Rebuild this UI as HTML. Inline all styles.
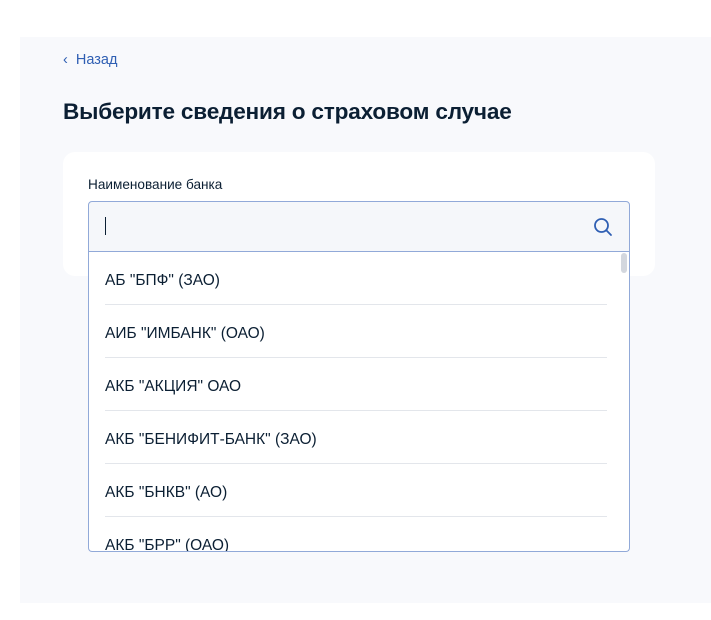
<!DOCTYPE html>
<html><head><meta charset="utf-8"><style>
*{margin:0;padding:0;box-sizing:border-box}
body{width:711px;height:620px;background:#fff;font-family:"Liberation Sans",sans-serif;position:relative;overflow:hidden}
.panel{position:absolute;left:20px;top:37px;width:691px;height:566px;background:#f8f9fc}
.back{position:absolute;left:63px;top:52px;font-size:14.5px;color:#2f5fb3}
.title{position:absolute;left:63px;top:99px;font-size:22.6px;font-weight:bold;color:#0b1f33;letter-spacing:-0.2px}
.card{position:absolute;left:63px;top:152px;width:592px;height:124px;background:#fff;border-radius:12px}
.label{position:absolute;left:88px;top:177px;font-size:13.6px;color:#0b1f33}
.input{position:absolute;left:88px;top:201px;width:542px;height:51px;background:#f5f7fa;border:1.5px solid #91a9d8;border-radius:4px 4px 0 0;z-index:2}
.caret{position:absolute;left:16px;top:15px;width:1px;height:18px;background:#0b1f33}
.dd{position:absolute;left:88px;top:251px;width:542px;height:301px;background:#fff;border:1.5px solid #91a9d8;border-top:none;border-radius:0 0 4px 4px;overflow:hidden}
.item{position:absolute;left:16px;width:502px;height:53px;font-size:15.5px;color:#0b1f33;line-height:57px;border-bottom:1px solid #e3e6eb;white-space:nowrap}
.sb{position:absolute;right:2px;top:2px;width:6px;height:20px;background:#d3d7de;border-radius:3px}
</style></head><body>
<div class="panel"></div>
<div class="back">‹&nbsp;&nbsp;Назад</div>
<div class="title">Выберите сведения о страховом случае</div>
<div class="card"></div>
<div class="label">Наименование банка</div>
<div class="input"><div class="caret"></div>
<svg style="position:absolute;left:504px;top:15px" width="20" height="20" viewBox="0 0 20 20"><circle cx="8.5" cy="8.5" r="6.5" fill="none" stroke="#2f5fb3" stroke-width="1.8"/><path d="M13.3 13.3L18 18" stroke="#2f5fb3" stroke-width="1.8" stroke-linecap="round"/></svg></div>
<div class="dd">
<div class="item" style="top:1px">АБ "БПФ" (ЗАО)</div>
<div class="item" style="top:54px">АИБ "ИМБАНК" (ОАО)</div>
<div class="item" style="top:107px">АКБ "АКЦИЯ" ОАО</div>
<div class="item" style="top:160px">АКБ "БЕНИФИТ-БАНК" (ЗАО)</div>
<div class="item" style="top:213px">АКБ "БНКВ" (АО)</div>
<div class="item" style="top:266px;border:none">АКБ "БРР" (ОАО)</div>
<div class="sb"></div>
</div>
</body></html>
